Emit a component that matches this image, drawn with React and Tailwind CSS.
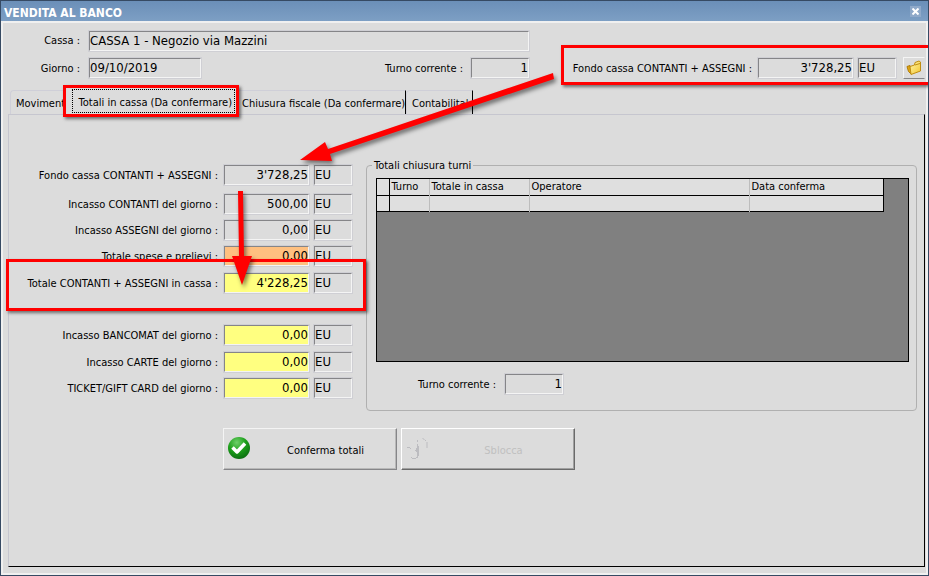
import React, { useState } from "react";
import clsx from "clsx";

const tabs = [
    { id: "movimenti", label: "Movimenti", width: "w-14" },
    { id: "totali", label: "Totali in cassa (Da confermare)", width: "w-[173px]" },
    { id: "chiusura", label: "Chiusura fiscale (Da confermare)", width: "w-[167px]" },
    { id: "contabilita", label: "Contabilita'", width: "w-[67px]" },
];

const totals = [
    { id: "fondo", label: "Fondo cassa CONTANTI + ASSEGNI :", value: "3'728,25", space: "mb-[7px]" },
    { id: "contanti", label: "Incasso CONTANTI del giorno :", value: "500,00", space: "mb-1" },
    { id: "assegni", label: "Incasso ASSEGNI del giorno :", value: "0,00", space: "mb-1" },
    { id: "spese", label: "Totale spese e prelievi :", value: "0,00", color: "bg-[#ffc080]", space: "mb-[5px]" },
    { id: "totale", label: "Totale CONTANTI + ASSEGNI in cassa :", value: "4'228,25", color: "bg-[#ffff80]", space: "mb-[30px]" },
    { id: "bancomat", label: "Incasso BANCOMAT del giorno :", value: "0,00", color: "bg-[#ffff80]", space: "mb-[5px]" },
    { id: "carte", label: "Incasso CARTE del giorno :", value: "0,00", color: "bg-[#ffff80]", space: "mb-1" },
    { id: "ticket", label: "TICKET/GIFT CARD del giorno :", value: "0,00", color: "bg-[#ffff80]" },
];

const Field = ({ className, color = "bg-[#dcdcdc]", numeric, ...props }) => (
    <div className={clsx("h-[22px] shrink-0 border border-[#cfcfd4]", className)}>
        <input
            readOnly
            className={clsx(
                "block h-full w-full border border-t-[#858588] border-l-[#858588] border-r-[#f4f4f4] border-b-[#f4f4f4] pb-[2px] text-[13px] outline-none",
                color,
                numeric ? "text-right" : "text-left"
            )}
            {...props}
        />
    </div>
);

const Frame = ({ className }) => (
    <div className={clsx("pointer-events-none absolute z-10 border-3 border-[#ff0000] shadow-[2px_2px_3px_rgba(0,0,0,0.5)]", className)} />
);

const FolderIcon = () => (
    <svg width="16" height="16" viewBox="0 0 16 16">
        <defs>
            <linearGradient id="folder" x1="0" y1="0" x2="1" y2="1">
                <stop offset="0" stopColor="#fff6b0" />
                <stop offset="1" stopColor="#f3c62c" />
            </linearGradient>
        </defs>
        <path d="M1 6.500 L4 5.500 L5 14 L2.500 11.500 Z" fill="#e2a812" stroke="#b07c08" strokeWidth="1" />
        <path d="M4 6.500 L8.500 5 L9 2.500 L13 1 L14.500 2 V11 L5 14.500 Z" fill="url(#folder)" stroke="#c08d10" strokeWidth="1" />
        <path d="M9 5 L14 3.500" stroke="#c08d10" strokeWidth="1" />
    </svg>
);

const CheckIcon = () => (
    <svg width="24" height="24" viewBox="0 0 24 24">
        <defs>
            <radialGradient id="green" cx="0.4" cy="0.25" r="0.8">
                <stop offset="0" stopColor="#6fd06a" />
                <stop offset="0.5" stopColor="#1c9f1a" />
                <stop offset="1" stopColor="#0a6a10" />
            </radialGradient>
        </defs>
        <circle cx="12" cy="11" r="11" fill="url(#green)" />
        <path d="M5.500 10.500 L10 15 L18 6.500" fill="none" stroke="#fff" strokeWidth="3.500" strokeLinejoin="round" />
    </svg>
);

const HandIcon = () => (
    <svg width="24" height="24" viewBox="0 0 24 24" fill="none" stroke="#bcbcc0" strokeWidth="1">
        <path d="M2 10.500h3M5 11.500h1M10 13.500h3M12.500 3v2M12.500 7v14M13.500 9v10M11.500 11v4M6 20.500h1M7 21.500h4M11 20.500h1" />
        <path d="M17.500 1l2 2M20.500 3v1M22 5v6" />
    </svg>
);

const App = () => {
    const [active, setActive] = useState("totali");

    return (
        <div className="relative flex min-h-screen flex-col overflow-hidden border border-[#364a63] bg-[#dcdcdc] font-['DejaVu_Sans_Condensed','DejaVu_Sans',sans-serif] text-[11px] leading-4 text-black">
            {/* Title bar */}
            <div className="flex h-5 items-center justify-between bg-linear-to-b from-[#6b8fb8] to-[#7d9fc4] pr-[7px] pl-[3px] text-white">
                <h1 className="pt-1 text-[12px] font-bold">VENDITA AL BANCO</h1>
                <button aria-label="Chiudi" className="flex size-[11px] items-center justify-center bg-[#8fa9c9]">
                    <svg width="7" height="7" viewBox="0 0 7 7" stroke="#fff" strokeWidth="2">
                        <path d="M0.500 0.500 L6.500 6.500 M6.500 0.500 L0.500 6.500" />
                    </svg>
                </button>
            </div>

            <div className="flex flex-1 flex-col border-2 border-[#f0f0f0] pr-px pb-[6px] pl-[5px]">
                {/* Header */}
                <div className="flex flex-col gap-[5px] pt-[7px]">
                    <div className="flex items-center">
                        <label htmlFor="cassa" className="mr-2 w-[72px] text-right">Cassa :</label>
                        <Field id="cassa" className="w-[442px]" defaultValue="CASSA 1 - Negozio via Mazzini" />
                    </div>
                    <div className="flex items-center">
                        <label htmlFor="giorno" className="mr-2 w-[72px] pt-[2px] text-right">Giorno :</label>
                        <Field id="giorno" className="w-[114px]" defaultValue="09/10/2019" />
                        <label htmlFor="turno" className="mr-[7px] w-[261px] pt-[2px] text-right">Turno corrente :</label>
                        <Field id="turno" className="w-[60px]" numeric defaultValue="1" />
                        <div className="relative ml-auto flex items-center">
                            <label htmlFor="fondo-cassa" className="mr-[5px] pt-[2px]">Fondo cassa CONTANTI + ASSEGNI :</label>
                            <Field id="fondo-cassa" className="w-[97px]" numeric defaultValue="3'728,25" />
                            <Field aria-label="Valuta" className="ml-[3px] w-10" defaultValue="EU" />
                            <button aria-label="Apri" className="ml-[6px] flex h-[22px] w-[22px] items-center justify-center border border-t-[#f4f4f4] border-l-[#f4f4f4] border-r-[#dcdcdc] border-b-[#858588]">
                                <FolderIcon />
                            </button>
                            <Frame className="-top-3 -right-4 -bottom-[6px] -left-3" />
                        </div>
                    </div>
                </div>

                {/* Tabs */}
                <div role="tablist" className="mt-[10px] flex h-[25px] pl-[2px]">
                    {tabs.map((tab) => (
                        <button
                            key={tab.id}
                            role="tab"
                            aria-selected={active === tab.id}
                            onClick={() => setActive(tab.id)}
                            className={clsx(
                                "relative shrink-0 whitespace-nowrap",
                                tab.width,
                                active === tab.id
                                    ? "z-10 h-full bg-[#dcdcdc] pr-1 pb-px pl-[6px]"
                                    : "mt-px h-6 rounded-tl border-t border-r border-l border-[#cfcfd8] border-r-black pt-[3px] pl-[5px] text-left",
                                tab.id === "chiusura" && "-ml-[3px] w-[170px]"
                            )}
                        >
                            {active === tab.id ? (
                                <>
                                    <span className="flex h-full items-center justify-end border border-dotted border-black pt-[3px] pr-[2px]">{tab.label}</span>
                                    <Frame className="-top-1 right-0 -bottom-[3px] -left-[3px]" />
                                </>
                            ) : (
                                tab.label
                            )}
                        </button>
                    ))}
                </div>

                {/* Tab panel */}
                <div role="tabpanel" className="flex flex-1 flex-col border border-[#c6c6cf] border-r-black border-b-black pt-[49px] pr-[7px] pl-3">
                    <div className="flex gap-[13px]">
                        <div className="relative flex shrink-0 flex-col">
                            {totals.map((row) => (
                                <div key={row.id} className={clsx("flex items-center", row.space)}>
                                    <label htmlFor={row.id} className="mr-[5px] w-[197px] pt-[2px] text-right whitespace-nowrap">{row.label}</label>
                                    <Field id={row.id} className="w-[87px]" color={row.color} numeric defaultValue={row.value} />
                                    <Field aria-label="Valuta" className="ml-[3px] w-10" defaultValue="EU" />
                                </div>
                            ))}
                            <Frame className="top-[95px] -right-[13px] -left-[15px] h-[52px]" />
                        </div>

                        <fieldset className="-mt-[7px] min-w-0 flex-1 rounded-[4px] border border-[#b0b0b0] pr-[7px] pb-[15px] pl-[9px]">
                            <legend className="-ml-1 px-[2px] pt-px leading-[15px]">Totali chiusura turni</legend>
                            <div className="mt-[5px] h-[184px] border border-black bg-[#808080]">
                                <table className="w-[507px] max-w-full table-fixed border-collapse bg-[#dfdfdf] text-left leading-[14px]">
                                    <thead>
                                        <tr className="h-4 border-b border-black">
                                            <th className="w-3 border-r border-black"></th>
                                            <th className="w-10 border-r border-[#bdbdbd] pt-px pl-[2px] font-normal">Turno</th>
                                            <th className="w-[100px] border-r border-[#bdbdbd] pt-px pl-[2px] font-normal">Totale in cassa</th>
                                            <th className="w-[220px] border-r border-[#bdbdbd] pt-px pl-[2px] font-normal">Operatore</th>
                                            <th className="border-r border-black pt-px pl-[2px] font-normal">Data conferma</th>
                                        </tr>
                                    </thead>
                                    <tbody>
                                        <tr className="h-4 border-b border-black">
                                            <td className="border-r border-black"></td>
                                            <td className="border-r border-[#bdbdbd]"></td>
                                            <td className="border-r border-[#bdbdbd]"></td>
                                            <td className="border-r border-[#bdbdbd]"></td>
                                            <td className="border-r border-black"></td>
                                        </tr>
                                    </tbody>
                                </table>
                            </div>
                            <div className="mt-[11px] flex items-center">
                                <label htmlFor="turno-chiusura" className="mr-2 w-[120px] pt-[2px] text-right">Turno corrente :</label>
                                <Field id="turno-chiusura" className="w-[60px]" numeric defaultValue="1" />
                            </div>
                        </fieldset>
                    </div>

                    {/* Actions */}
                    <div className="mt-[17px] flex gap-1 pl-[202px]">
                        <button className="flex h-[42px] w-[174px] items-center border border-t-[#f4f4f4] border-l-[#f4f4f4] border-r-[#858588] border-b-[#858588] pl-[3px] shadow-[inset_-1px_-1px_0_#b8b8b8]">
                            <CheckIcon />
                            <span className="flex-1 pt-[3px] pl-1 text-center">Conferma totali</span>
                        </button>
                        <button disabled className="flex h-[42px] w-[174px] items-center border border-t-white border-l-white border-r-[#6a6a6a] border-b-[#6a6a6a] pl-[3px] text-[#c0c0c0] shadow-[inset_-1px_-1px_0_#a0a0a0]">
                            <HandIcon />
                            <span className="flex-1 pt-[3px] pl-1 text-center">Sblocca</span>
                        </button>
                    </div>
                </div>
            </div>

            {/* Arrows */}
            <svg className="pointer-events-none absolute top-0 left-0 z-20 drop-shadow-[2px_3px_2px_rgba(0,0,0,0.5)]" width="560" height="290" fill="#ff0000">
                <path d="M552 72 L553 78 L329 153 L331 160 L299 159 L324 141 L327 148 Z" />
                <path d="M237 190 L242 190 L243 255 L251 255 L241 284 L231 255 L238 255 Z" />
            </svg>
        </div>
    );
};

export default App;
